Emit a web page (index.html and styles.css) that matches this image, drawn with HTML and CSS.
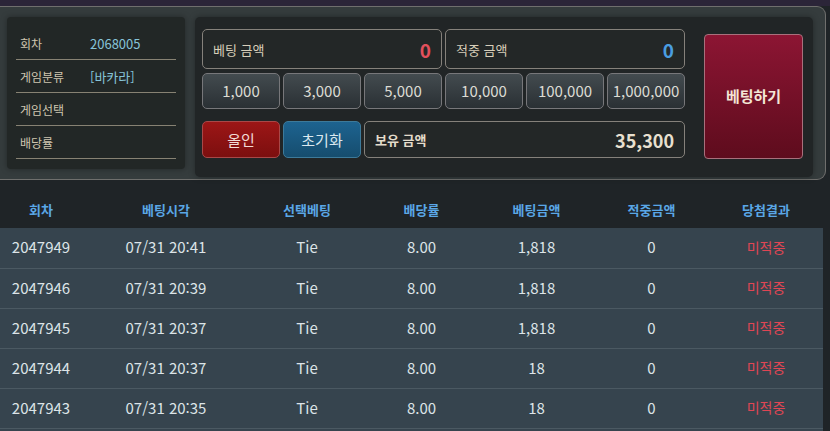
FILE: index.html
```html
<!DOCTYPE html>
<html lang="ko">
<head>
<meta charset="utf-8">
<link rel="stylesheet" href="styles.css">
</head>
<body>
<div class="topbar"></div>
<div class="panel">
  <div class="info">
    <div class="info-row"><span class="lbl">회차</span><span class="val">2068005</span></div>
    <div class="info-row"><span class="lbl">게임분류</span><span class="val">[바카라]</span></div>
    <div class="info-row"><span class="lbl">게임선택</span><span class="val"></span></div>
    <div class="info-row"><span class="lbl">배당률</span><span class="val"></span></div>
  </div>
  <div class="bet">
    <div class="bet-grid">
      <div class="amount span3"><span>베팅 금액</span><b class="red">0</b></div>
      <div class="amount span3"><span>적중 금액</span><b class="blue">0</b></div>
      <button class="chip">1,000</button>
      <button class="chip">3,000</button>
      <button class="chip">5,000</button>
      <button class="chip">10,000</button>
      <button class="chip">100,000</button>
      <button class="chip">1,000,000</button>
      <button class="allin">올인</button>
      <button class="reset">초기화</button>
      <div class="balance span4"><span>보유 금액</span><b>35,300</b></div>
    </div>
    <button class="submit">베팅하기</button>
  </div>
</div>
<div class="history">
  <table>
    <colgroup>
      <col class="c1"><col class="c2"><col class="c3"><col class="c4"><col class="c5"><col class="c6"><col class="c7">
    </colgroup>
    <thead>
      <tr><th>회차</th><th>베팅시각</th><th>선택베팅</th><th>배당률</th><th>베팅금액</th><th>적중금액</th><th>당첨결과</th></tr>
    </thead>
    <tbody>
      <tr><td>2047949</td><td>07/31 20:41</td><td>Tie</td><td>8.00</td><td>1,818</td><td>0</td><td class="lose">미적중</td></tr>
      <tr><td>2047946</td><td>07/31 20:39</td><td>Tie</td><td>8.00</td><td>1,818</td><td>0</td><td class="lose">미적중</td></tr>
      <tr><td>2047945</td><td>07/31 20:37</td><td>Tie</td><td>8.00</td><td>1,818</td><td>0</td><td class="lose">미적중</td></tr>
      <tr><td>2047944</td><td>07/31 20:37</td><td>Tie</td><td>8.00</td><td>18</td><td>0</td><td class="lose">미적중</td></tr>
      <tr><td>2047943</td><td>07/31 20:35</td><td>Tie</td><td>8.00</td><td>18</td><td>0</td><td class="lose">미적중</td></tr>
    </tbody>
  </table>
  <div class="tail"></div>
</div>
</body>
</html>
```
FILE: styles.css
```css
* { box-sizing: border-box; }
html, body { margin: 0; padding: 0; }
body {
  background: #1f2427;
  font-family: "Noto Sans CJK KR", "Noto Sans", sans-serif;
  width: 830px;
  height: 431px;
  overflow: hidden;
}
.topbar { height: 6px; background: #2b2538; }
.panel {
  width: 826px;
  height: 174px;
  background: #353c3d;
  border: 1px solid #6f6f6d;
  border-left: none;
  border-radius: 0 9px 9px 0;
  display: flex;
  align-items: flex-start;
  padding: 10px 0 0 7px;
  gap: 10px;
}
.info {
  width: 178px;
  height: 152px;
  background: #222726;
  border-radius: 4px;
  box-shadow: 0 0 6px rgba(0,0,0,0.35);
  padding: 10px 9px 0 9px;
}
.info-row {
  height: 33px;
  border-bottom: 1px solid #878273;
  display: flex;
  align-items: center;
  padding-left: 4px;
  font-size: 12px;
}
.info-row .lbl { width: 70px; color: #cfc6b0; }
.info-row .val { color: #86c3d8; font-size: 13px; }
.bet {
  width: 618px;
  height: 160px;
  background: #212526;
  border-radius: 5px;
  box-shadow: 0 0 6px rgba(0,0,0,0.35);
  padding: 12px 10px 0 7px;
  display: flex;
  align-items: flex-start;
  gap: 19px;
}
.bet-grid {
  display: grid;
  grid-template-columns: repeat(6, 78px);
  grid-template-rows: 40px 36px 45px;
  column-gap: 3px;
  row-gap: 4px;
}
.span3 { grid-column: span 3; }
.span4 { grid-column: span 4; }
.amount, .balance {
  border: 1px solid #85817b;
  border-radius: 5px;
  background: #232727;
  display: flex;
  align-items: center;
  justify-content: space-between;
  padding: 0 10px 0 10px;
}
.amount span { color: #d8cfba; font-size: 13px; }
.amount b { font-size: 19px; font-weight: 700; }
.red { color: #e2505c; }
.blue { color: #4a9de0; }
.chip, .allin, .reset {
  font-family: inherit;
  font-size: 15px;
  border-radius: 5px;
  padding: 0;
  margin: 0;
  cursor: pointer;
}
.chip {
  background: linear-gradient(#434b4f, #2a3034);
  border: 1px solid #77777a;
  color: #dcdcd4;
  padding-bottom: 1px;
}
.allin, .reset, .balance { margin-top: 8px; }
.allin {
  background: linear-gradient(#9c1616, #7c0f0f);
  border: 1px solid #a84848;
  color: #f2dcd6;
}
.reset {
  background: linear-gradient(#1d6390, #164d6e);
  border: 1px solid #3d7a9a;
  color: #dbe8ef;
}
.balance span { color: #e4dccb; font-size: 13px; font-weight: 700; }
.balance b { color: #e8e0d0; font-size: 18px; font-weight: 700; }
.submit {
  margin-top: 5px;
  width: 99px;
  height: 125px;
  border: 1px solid #a8707c;
  border-radius: 4px;
  background: linear-gradient(#8c1533, #5e0c1d);
  color: #f3e6d6;
  font-family: inherit;
  font-size: 15px;
  font-weight: 700;
  padding: 0 0 2px 0;
}
table {
  width: 823px;
  border-collapse: collapse;
  table-layout: fixed;
}
col.c1 { width: 82px; }
col.c2 { width: 168px; }
col.c3 { width: 114px; }
col.c4, col.c5, col.c6 { width: 115px; }
col.c7 { width: 114px; }
th {
  height: 48px;
  padding: 10px 0 0 0;
  color: #5aa7e6;
  font-size: 13px;
  font-weight: 700;
  text-align: center;
}
td {
  height: 40px;
  background: #36444e;
  border-bottom: 1px solid #4b5962;
  color: #dde4e8;
  font-size: 15px;
  text-align: center;
  padding: 0 0 2px 0;
}
td.lose { color: #e04654; font-size: 14px; }
.tail { width: 823px; height: 20px; background: #36444e; }
```
